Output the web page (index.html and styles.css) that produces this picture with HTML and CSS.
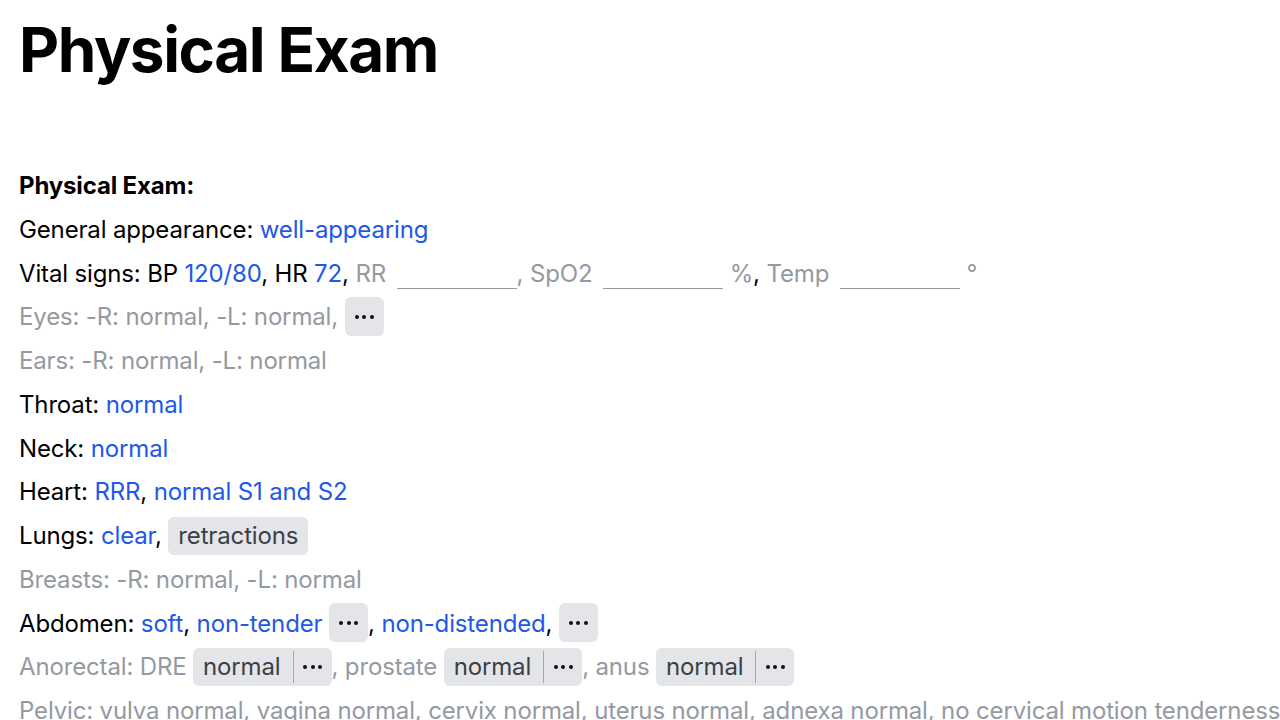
FILE: index.html
```html
<!DOCTYPE html>
<html lang="en">
<head>
<meta charset="utf-8">
<title>Physical Exam</title>
<link rel="stylesheet" href="styles.css">
</head>
<body>
<main class="page">
  <h1 class="title">Physical Exam</h1>
  <section class="note">
    <div class="row"><strong>Physical Exam:</strong></div>
    <div class="row">General appearance: <span class="val">well-appearing</span></div>
    <div class="row">Vital signs: BP <span class="val">120/80</span>, HR <span class="val">72</span>, <span class="muted">RR <span class="blank"></span>, SpO2 <span class="blank"></span> %</span>, <span class="muted">Temp <span class="blank"></span> °</span></div>
    <div class="row muted">Eyes: -R: normal, -L: normal, <button class="more"><span class="dots"><i></i><i></i><i></i></span></button></div>
    <div class="row muted">Ears: -R: normal, -L: normal</div>
    <div class="row">Throat: <span class="val">normal</span></div>
    <div class="row">Neck: <span class="val">normal</span></div>
    <div class="row">Heart: <span class="val">RRR</span>, <span class="val">normal S1 and S2</span></div>
    <div class="row">Lungs: <span class="val">clear</span>, <span class="chip">retractions</span></div>
    <div class="row muted">Breasts: -R: normal, -L: normal</div>
    <div class="row">Abdomen: <span class="val">soft</span>, <span class="val">non-tender</span> <button class="more"><span class="dots"><i></i><i></i><i></i></span></button>, <span class="val">non-distended</span>, <button class="more"><span class="dots"><i></i><i></i><i></i></span></button></div>
    <div class="row muted">Anorectal: DRE <span class="split"><span class="split-label">normal</span><span class="split-more"><span class="dots"><i></i><i></i><i></i></span></span></span>, prostate <span class="split"><span class="split-label">normal</span><span class="split-more"><span class="dots"><i></i><i></i><i></i></span></span></span>, anus <span class="split"><span class="split-label">normal</span><span class="split-more"><span class="dots"><i></i><i></i><i></i></span></span></span></div>
    <div class="row muted">Pelvic: vulva normal, vagina normal, cervix normal, uterus normal, adnexa normal, no cervical motion tenderness</div>
  </section>
</main>
</body>
</html>
```

FILE: styles.css
```css
html, body {
  margin: 0;
  padding: 0;
  background: #ffffff;
  height: 720px;
  overflow: hidden;
}

body {
  font-family: Inter, "Noto Sans", "Liberation Sans", sans-serif;
  color: #000000;
}

.page {
  padding: 14px 0 0 19px;
}

.title {
  margin: 0;
  font-size: 62px;
  line-height: 72px;
  font-weight: 700;
  letter-spacing: -1.4px;
}

.note {
  margin-top: 78px;
  font-size: 24px;
  letter-spacing: -0.15px;
}

.row {
  height: 43.75px;
  line-height: 43.75px;
  white-space: nowrap;
}

.row strong {
  font-weight: 700;
}

.val {
  color: #2158e8;
}

.muted {
  color: #9499a2;
}

.blank {
  display: inline-block;
  width: 120px;
  height: 22px;
  border-bottom: 1px solid #9499a2;
  vertical-align: -7px;
  margin-left: 4px;
}

.more {
  display: inline-flex;
  align-items: center;
  justify-content: center;
  width: 39px;
  height: 39px;
  padding: 0;
  border: none;
  border-radius: 6px;
  background: #e4e5e9;
  vertical-align: middle;
  margin-top: -4px;
  cursor: pointer;
}

.dots {
  display: inline-flex;
  gap: 3.5px;
}

.dots i {
  display: block;
  width: 4px;
  height: 4px;
  border-radius: 50%;
  background: #111111;
}

.chip {
  display: inline-block;
  height: 38px;
  line-height: 38px;
  padding: 0 10px;
  border-radius: 6px;
  background: #e4e5e9;
  color: #3b3f47;
  vertical-align: middle;
  margin-top: -3px;
}

.split {
  display: inline-flex;
  align-items: center;
  height: 38px;
  border-radius: 6px;
  background: #e4e5e9;
  color: #3b3f47;
  vertical-align: middle;
  margin-top: -3px;
}

.split-label {
  padding: 0 12px 0 10px;
  border-right: 1px solid #a3a7ae;
  height: 32px;
  line-height: 32px;
}

.split-more {
  display: inline-flex;
  align-items: center;
  justify-content: center;
  width: 38px;
  height: 38px;
}
```
